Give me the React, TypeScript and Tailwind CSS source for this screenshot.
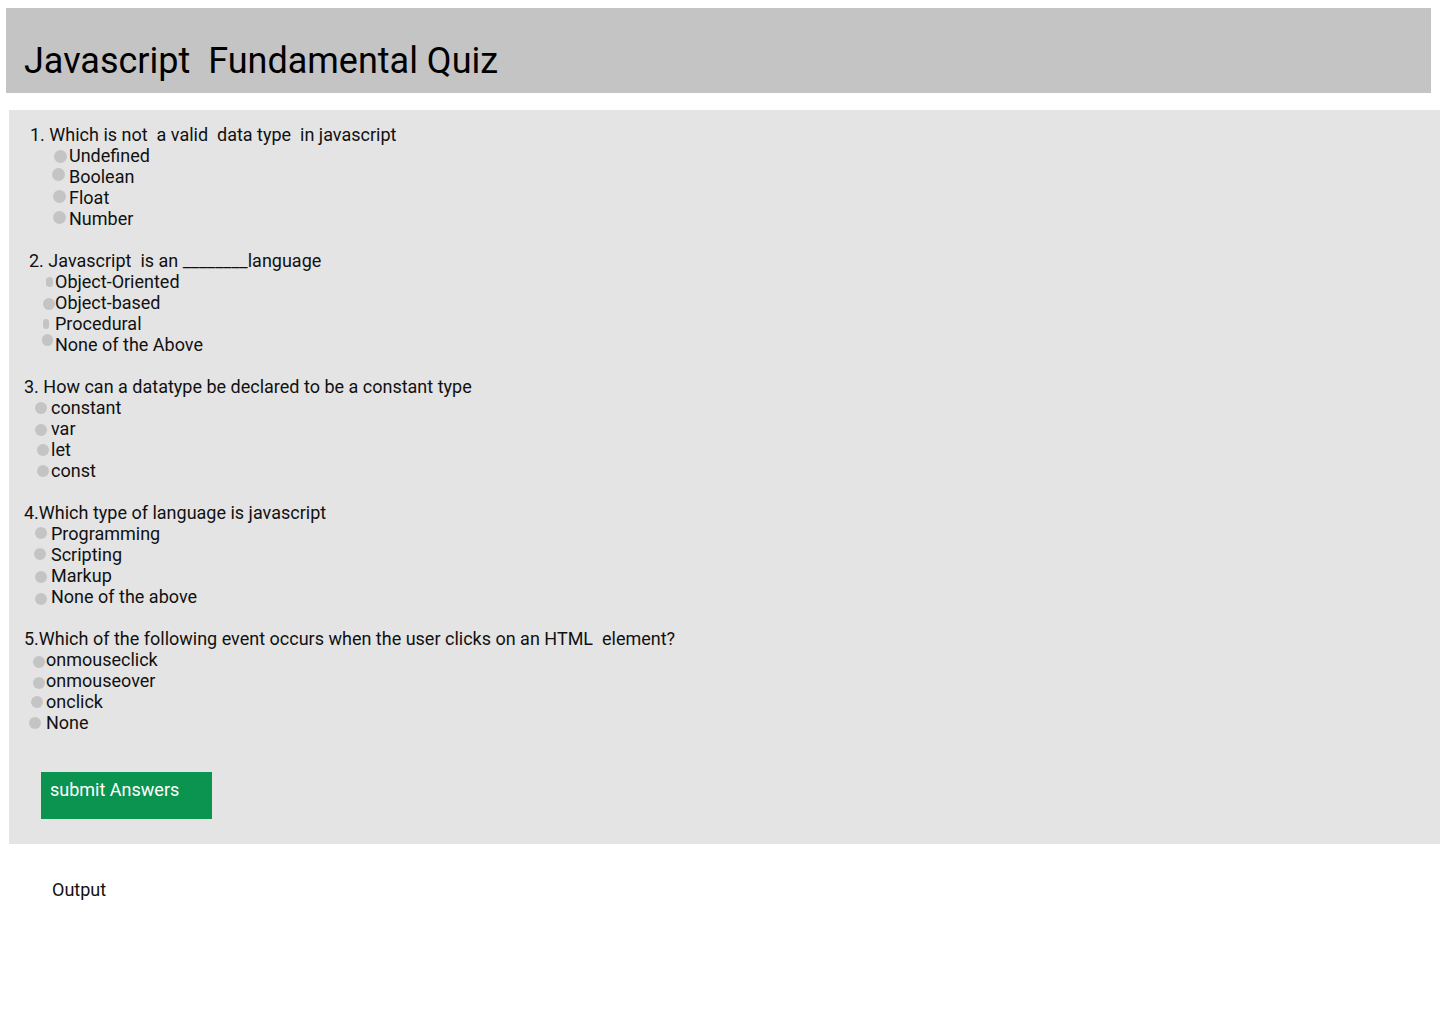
import React from 'react';

type Option = {
  label: string;
  dot: string; // circle placement + size
  text: string; // gap between circle and label
};

type Question = {
  title: string;
  titleClass: string;
  options: Option[];
};

const questions: Question[] = [
  {
    title: '1. Which is not  a valid  data type  in javascript',
    titleClass: 'ml-[21px]',
    options: [
      { label: 'Undefined', dot: 'ml-[45px] w-[13px] h-[13px] translate-y-[1px]', text: 'ml-[2px]' },
      { label: 'Boolean', dot: 'ml-[43px] w-[13px] h-[13px] -translate-y-[2px]', text: 'ml-[4px]' },
      { label: 'Float', dot: 'ml-[44px] w-[13px] h-[13px] -translate-y-[1px]', text: 'ml-[3px]' },
      { label: 'Number', dot: 'ml-[44px] w-[13px] h-[13px] -translate-y-[1px]', text: 'ml-[3px]' },
    ],
  },
  {
    title: '2. Javascript  is an ________language',
    titleClass: 'ml-[20px]',
    options: [
      { label: 'Object-Oriented', dot: 'ml-[37px] w-[7px] h-[10px]', text: 'ml-[2px]' },
      { label: 'Object-based', dot: 'ml-[34px] w-[12px] h-[12px] translate-y-[1px]', text: 'ml-[0px]' },
      { label: 'Procedural', dot: 'ml-[34px] w-[6px] h-[10px]', text: 'ml-[6px]' },
      { label: 'None of the Above', dot: 'ml-[33px] w-[11px] h-[12px] -translate-y-[5px]', text: 'ml-[2px]' },
    ],
  },
  {
    title: '3. How can a datatype be declared to be a constant type',
    titleClass: 'ml-[15px]',
    options: [
      { label: 'constant', dot: 'ml-[26px] w-[12px] h-[12px]', text: 'ml-[4px]' },
      { label: 'var', dot: 'ml-[26px] w-[12px] h-[12px] translate-y-[1px]', text: 'ml-[4px]' },
      { label: 'let', dot: 'ml-[28px] w-[12px] h-[12px]', text: 'ml-[2px]' },
      { label: 'const', dot: 'ml-[28px] w-[12px] h-[12px]', text: 'ml-[2px]' },
    ],
  },
  {
    title: '4.Which type of language is javascript',
    titleClass: 'ml-[15px]',
    options: [
      { label: 'Programming', dot: 'ml-[26px] w-[12px] h-[12px] -translate-y-[1px]', text: 'ml-[4px]' },
      { label: 'Scripting', dot: 'ml-[25px] w-[12px] h-[12px] -translate-y-[1px]', text: 'ml-[5px]' },
      { label: 'Markup', dot: 'ml-[26px] w-[12px] h-[12px] translate-y-[1px]', text: 'ml-[4px]' },
      { label: 'None of the above', dot: 'ml-[26px] w-[12px] h-[12px] translate-y-[2px]', text: 'ml-[4px]' },
    ],
  },
  {
    title: '5.Which of the following event occurs when the user clicks on an HTML  element?',
    titleClass: 'ml-[15px]',
    options: [
      { label: 'onmouseclick', dot: 'ml-[24px] w-[12px] h-[12px] translate-y-[2px]', text: 'ml-[1px]' },
      { label: 'onmouseover', dot: 'ml-[24px] w-[12px] h-[12px] translate-y-[2px]', text: 'ml-[1px]' },
      { label: 'onclick', dot: 'ml-[22px] w-[12px] h-[12px]', text: 'ml-[3px]' },
      { label: 'None', dot: 'ml-[20px] w-[12px] h-[12px]', text: 'ml-[5px]' },
    ],
  },
];

export default function App() {
  return (
    <div className="min-h-[1024px] bg-white font-['Roboto',sans-serif] text-[#111]">
      {/* Header bar */}
      <div className="ml-[6px] mt-[8px] h-[85px] w-[1425px] bg-[#c4c4c4] pl-[18px] pt-[32px]">
        <h1 className="whitespace-pre text-[36px] leading-[42px] text-black">Javascript  Fundamental Quiz</h1>
      </div>

      {/* Quiz panel */}
      <div className="ml-[9px] mt-[17px] w-[1431px] bg-[#e4e4e4] pt-[14px] pb-[25px]">
        {questions.map((q, i) => (
          <div key={i} className={i < questions.length - 1 ? 'mb-[21px]' : ''}>
            <div className={`whitespace-pre text-[18px] leading-[21px] ${q.titleClass}`}>{q.title}</div>
            {q.options.map((o) => (
              <div key={o.label} className="flex h-[21px] items-center">
                <span className={`shrink-0 rounded-full bg-[#c4c4c4] ${o.dot}`} />
                <span className={`text-[18px] leading-[21px] ${o.text}`}>{o.label}</span>
              </div>
            ))}
          </div>
        ))}

        <button className="ml-[32px] mt-[39px] flex h-[47px] w-[171px] items-start bg-[#0b9450] pl-[9px] pt-[7px] text-left text-[18px] leading-[21px] text-white">
          submit Answers
        </button>
      </div>

      {/* Output */}
      <div className="ml-[52px] mt-[35px] text-[18px] leading-[21px]">Output</div>
    </div>
  );
}
